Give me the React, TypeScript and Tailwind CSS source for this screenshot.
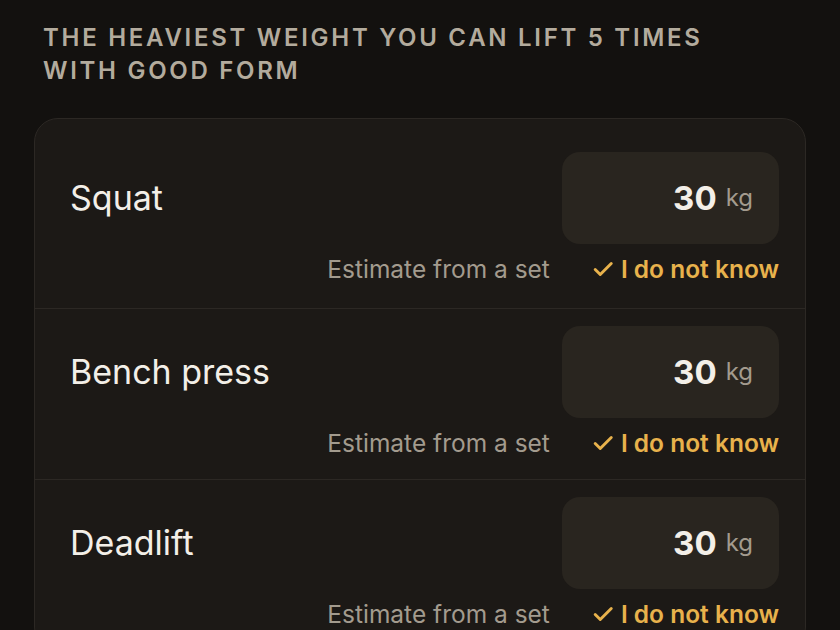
import React from "react";

const rows = ["Squat", "Bench press", "Deadlift"];

function Check() {
  return (
    <svg width="22" height="22" viewBox="0 0 24 24" fill="none" stroke="currentColor" strokeWidth="3.2" strokeLinecap="round" strokeLinejoin="round">
      <path d="M3.5 12.5l5.5 5.5L21 6" />
    </svg>
  );
}

export default function App() {
  return (
    <div
      className="w-[840px] h-[630px] overflow-hidden bg-[#13110f] pl-[34px] pr-[34px] pt-[21px]"
      style={{ fontFamily: "Inter, 'Noto Sans', sans-serif" }}
    >
      <h1 className="pl-[9px] text-[24px] leading-[33px] font-semibold tracking-[0.113em] text-[#b3ab9d] uppercase">
        The heaviest weight you can lift 5 times
        <br />
        with good form
      </h1>
      <div className="mt-[31px] rounded-[24px] border border-[#2c2824] bg-[#1c1916] pt-[16px]">
        {rows.map((name, i) => (
          <div
            key={name}
            className={
              "pl-[35px] pr-[26px] pt-[17px] " +
              (i === 0 ? "pb-[24px]" : "pb-[21px] border-t border-[#2c2824]")
            }
          >
            <div className="flex items-center justify-between">
              <div className="text-[34px] leading-[40px] text-[#f3efe8]">{name}</div>
              <div className="w-[217px] h-[92px] rounded-[18px] bg-[#29251f] flex items-center justify-end pr-[26px] gap-[9px]">
                <span className="text-[33px] font-bold text-[#f3efe8] leading-none">30</span>
                <span className="text-[24px] text-[#a39b8e] leading-none">kg</span>
              </div>
            </div>
            <div className="mt-[10px] h-[30px] flex items-center justify-end gap-[42px]">
              <span className="text-[24.5px] text-[#a39b8e]">Estimate from a set</span>
              <span className="flex items-center gap-[7px] text-[24.5px] font-semibold text-[#e8b24c]">
                <Check />
                I do not know
              </span>
            </div>
          </div>
        ))}
      </div>
    </div>
  );
}
